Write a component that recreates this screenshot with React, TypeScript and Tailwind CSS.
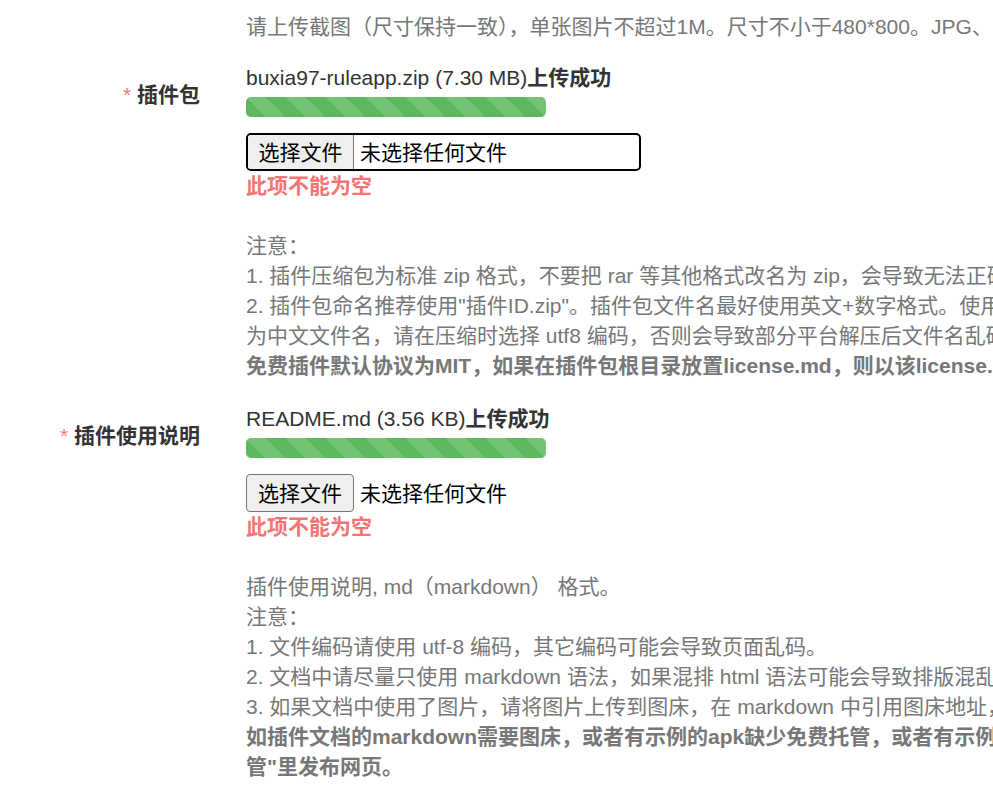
const FONT = "font-['Liberation_Sans','Noto_Sans_CJK_SC',sans-serif]";

function Label({ text }: { text: string }) {
  return (
    <div className="w-[200px] shrink-0 pt-[17px] text-right text-[21px] leading-[30px] text-[#333]">
      <span className="text-[#f58080]">*</span>{" "}
      <span className="font-bold">{text}</span>
    </div>
  );
}

function Progress() {
  return (
    <div className="mt-[4px] h-[20px] w-[300px] rounded-[5px] bg-[#5cb85c] bg-[linear-gradient(45deg,rgba(255,255,255,.15)_25%,transparent_25%,transparent_50%,rgba(255,255,255,.15)_50%,rgba(255,255,255,.15)_75%,transparent_75%,transparent)] bg-[length:40px_40px]" />
  );
}

function FileInput({ focused }: { focused?: boolean }) {
  if (focused) {
    return (
      <div className="mt-[16px] flex h-[38px] w-[395px] items-stretch rounded-[5px] border-2 border-black text-[21px] text-black">
        <div className="flex w-[106px] items-center justify-center rounded-l-[3px] border-r border-[#767676] bg-[#efefef] leading-none">
          选择文件
        </div>
        <div className="ml-[6px] flex items-center leading-none">未选择任何文件</div>
      </div>
    );
  }
  return (
    <div className="mt-[16px] flex h-[38px] items-center text-[21px] text-black">
      <div className="flex h-full w-[108px] items-center justify-center rounded-[4px] border border-[#767676] bg-[#efefef] leading-none">
        选择文件
      </div>
      <div className="ml-[6px] leading-none">未选择任何文件</div>
    </div>
  );
}

function Upload({ file, size }: { file: string; size: string }) {
  return (
    <>
      <div className="text-[#333]">
        {file} ({size})<b>上传成功</b>
      </div>
      <Progress />
    </>
  );
}

export default function App() {
  return (
    <div className={`${FONT} h-[800px] w-[993px] overflow-hidden bg-white pt-[12px] text-[21px] leading-[30px]`}>
      <div className="flex">
        <div className="w-[200px] shrink-0" />
        <div className="ml-[46px] whitespace-nowrap text-[#777]">
          请上传截图（尺寸保持一致），单张图片不超过1M。尺寸不小于480*800。JPG、PNG格式。
        </div>
      </div>

      <div className="mt-[21px] flex">
        <Label text="插件包" />
        <div className="ml-[46px] whitespace-nowrap">
          <Upload file="buxia97-ruleapp.zip" size="7.30 MB" />
          <FileInput focused />
          <div className="font-bold text-[#f47474]">此项不能为空</div>
          <div className="mt-[30px] text-[#777]">
            <div>注意：</div>
            <div>1. 插件压缩包为标准 zip 格式，不要把 rar 等其他格式改名为 zip，会导致无法正确解压。</div>
            <div>2. 插件包命名推荐使用"插件ID.zip"。插件包文件名最好使用英文+数字格式。使用中文文件名</div>
            <div>为中文文件名，请在压缩时选择 utf8 编码，否则会导致部分平台解压后文件名乱码。</div>
            <div className="font-bold">免费插件默认协议为MIT，如果在插件包根目录放置license.md，则以该license.md为准。</div>
          </div>
        </div>
      </div>

      <div className="mt-[23px] flex">
        <Label text="插件使用说明" />
        <div className="ml-[46px] whitespace-nowrap">
          <Upload file="README.md" size="3.56 KB" />
          <FileInput />
          <div className="font-bold text-[#f47474]">此项不能为空</div>
          <div className="mt-[30px] text-[#777]">
            <div>插件使用说明, md（markdown） 格式。</div>
            <div>注意：</div>
            <div>1. 文件编码请使用 utf-8 编码，其它编码可能会导致页面乱码。</div>
            <div>2. 文档中请尽量只使用 markdown 语法，如果混排 html 语法可能会导致排版混乱。</div>
            <div>3. 如果文档中使用了图片，请将图片上传到图床，在 markdown 中引用图床地址，否则图片无法显示。</div>
            <div className="font-bold">如插件文档的markdown需要图床，或者有示例的apk缺少免费托管，或者有示例网页需要托管，可在"免费托</div>
            <div className="font-bold">管"里发布网页。</div>
          </div>
        </div>
      </div>
    </div>
  );
}
